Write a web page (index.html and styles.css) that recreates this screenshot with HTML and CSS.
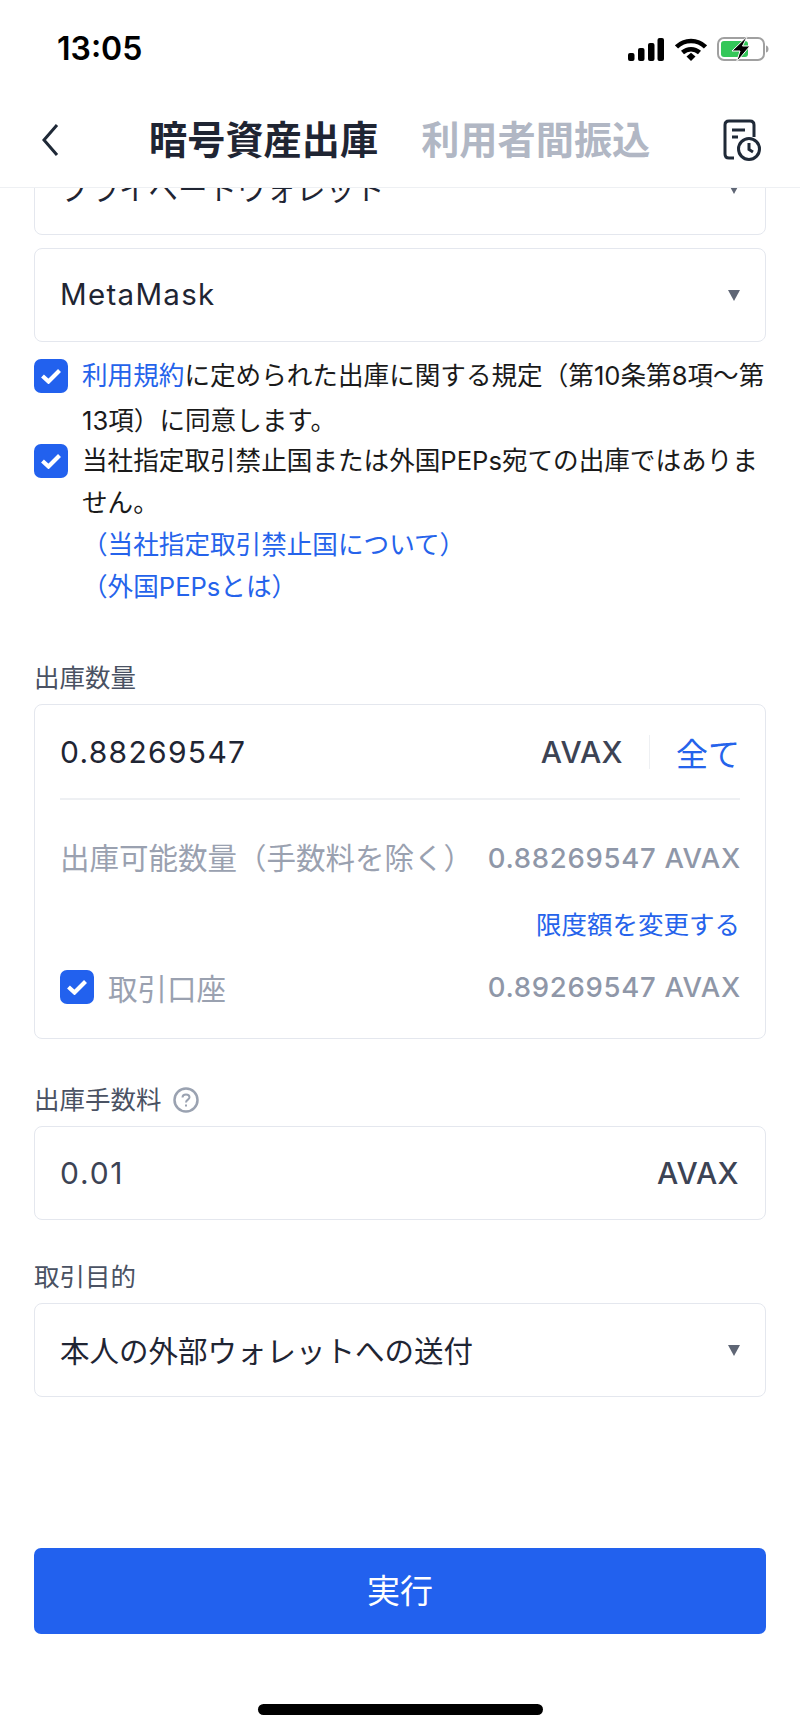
FILE: index.html
```html
<!DOCTYPE html>
<html lang="ja">
<head>
    <meta charset="UTF-8">
    <meta name="viewport" content="width=device-width, initial-scale=1.0">
    <title>暗号資産出庫</title>
    <link rel="stylesheet" href="styles.css">
</head>
<body>
    <div class="screen">
        <!-- Status bar -->
        <div class="status-bar">
            <span class="time">13:05</span>
            <div class="status-icons">
                <svg width="36" height="23" viewBox="0 0 36 23" fill="#000">
                    <rect x="0" y="15" width="6.500" height="8" rx="2"/>
                    <rect x="10" y="10" width="6.500" height="13" rx="2"/>
                    <rect x="20" y="5" width="6.500" height="18" rx="2"/>
                    <rect x="29.500" y="0" width="6.500" height="23" rx="2"/>
                </svg>
                <svg class="wifi" width="32" height="23" viewBox="0 0 32 23" fill="none" stroke="#000" stroke-width="4.500">
                    <path d="M1.500 9C9.500 1 22.500 1 30.500 9"/>
                    <path d="M7.500 14.500C12.500 10 19.500 10 24.500 14.500"/>
                    <path d="M11.500 18.500L16 14.800L20.500 18.500L16 23Z" fill="#000" stroke="none"/>
                </svg>
                <svg width="52" height="26" viewBox="0 0 52 26" fill="none">
                    <rect x="1" y="2" width="46" height="22" rx="6" stroke="#a0a0a0" stroke-width="2"/>
                    <rect x="4" y="5" width="27" height="16" rx="3" fill="#34c759"/>
                    <path d="M29 9H31V17H28Z" fill="#34c759"/>
                    <path d="M49 9.500C51 10 51.500 11.500 51.500 13C51.500 14.500 51 16 49 16.500Z" fill="#a0a0a0"/>
                    <path d="M30.500 0L15 15H23L19.500 26L33 10H25.500Z" fill="#000" stroke="#fff" stroke-width="1"/>
                </svg>
            </div>
        </div>

        <!-- Header -->
        <header class="header">
            <svg class="back" width="18" height="34" viewBox="0 0 18 34" fill="none" stroke="#1f2937" stroke-width="3">
                <path d="M16 2L3 17L16 32"/>
            </svg>
            <div class="tabs">
                <span class="tab active">暗号資産出庫</span>
                <span class="tab">利用者間振込</span>
            </div>
            <svg class="history" width="38" height="42" viewBox="0 0 38 42" fill="none" stroke="#1f2937" stroke-width="3">
                <path d="M11 39H6C3.500 39 2 37.500 2 35V6C2 3.500 3.500 2 6 2H27C29.500 2 31 3.500 31 6V18"/>
                <path d="M9 11H22M9 18H15"/>
                <circle cx="26" cy="30" r="10.500"/>
                <path d="M26 24V30.500L30 33"/>
            </svg>
        </header>

        <main class="content">
            <div class="select clipped">
                <span>プライベートウォレット</span>
                <i class="arrow"></i>
            </div>
            <div class="select">
                <span class="latin">MetaMask</span>
                <i class="arrow"></i>
            </div>

            <div class="agree terms">
                <span class="check"><svg width="20" height="16" viewBox="0 0 20 16" fill="none" stroke="#fff" stroke-width="4.200"><path d="M1.500 8L7.500 13.500L18.500 2.500"/></svg></span>
                <p><a>利用規約</a>に定められた出庫に関する規定（第10条第8項～第13項）に同意します。</p>
            </div>
            <div class="agree peps">
                <span class="check"><svg width="20" height="16" viewBox="0 0 20 16" fill="none" stroke="#fff" stroke-width="4.200"><path d="M1.500 8L7.500 13.500L18.500 2.500"/></svg></span>
                <p>当社指定取引禁止国または外国PEPs宛ての出庫ではありません。<br><a>（当社指定取引禁止国について）</a><br><a>（外国PEPsとは）</a></p>
            </div>

            <label class="field-label first">出庫数量</label>
            <div class="card">
                <div class="amount-row">
                    <span class="amount">0.88269547</span>
                    <span class="unit">AVAX</span>
                    <span class="sep"></span>
                    <a class="all">全て</a>
                </div>
                <div class="info-row available">
                    <span>出庫可能数量（手数料を除く）</span>
                    <span class="value">0.88269547 AVAX</span>
                </div>
                <a class="limit">限度額を変更する</a>
                <div class="info-row account">
                    <span class="account-name">
                        <span class="check"><svg width="20" height="16" viewBox="0 0 20 16" fill="none" stroke="#fff" stroke-width="4.200"><path d="M1.500 8L7.500 13.500L18.500 2.500"/></svg></span>
                        取引口座
                    </span>
                    <span class="value">0.89269547 AVAX</span>
                </div>
            </div>

            <label class="field-label">出庫手数料
                <svg width="26" height="26" viewBox="0 0 26 26" fill="none" stroke="#9aa2b1" stroke-width="2.500">
                    <circle cx="13" cy="13" r="11.500"/>
                    <path d="M9.500 10.500C9.500 8.500 11 7.500 13 7.500C15 7.500 16.500 8.700 16.500 10.300C16.500 12.500 13 12.800 13 15.500" stroke-width="2"/>
                    <path d="M13 17.500V19.500" stroke-width="2"/>
                </svg>
            </label>
            <div class="fee">
                <span class="fee-value">0.01</span>
                <span class="unit">AVAX</span>
            </div>

            <label class="field-label purpose">取引目的</label>
            <div class="select">
                <span>本人の外部ウォレットへの送付</span>
                <i class="arrow"></i>
            </div>
        </main>

        <footer class="footer">
            <button class="submit">実行</button>
            <div class="home-bar"></div>
        </footer>
    </div>
</body>
</html>
```

FILE: styles.css
```css
/* General Styles */
* {
    box-sizing: border-box;
}

body {
    margin: 0;
    background-color: #fff;
    color: #1f2533;
    font-family: Inter, "Noto Sans CJK JP", sans-serif;
}

.screen {
    width: 800px;
    height: 1732px;
    display: flex;
    flex-direction: column;
    overflow: hidden;
}

/* Status bar */
.status-bar {
    height: 95px;
    padding: 32px 31px 0 57px;
    display: flex;
    justify-content: space-between;
    align-items: flex-start;
}

.time {
    font-size: 32px;
    line-height: 34px;
    font-weight: 600;
    color: #000;
}

.status-icons {
    display: flex;
    align-items: center;
    gap: 11px;
    margin-top: 4px;
}

.wifi {
    margin-right: -1px;
}

/* Header */
.header {
    height: 93px;
    padding: 0 39px 2px 41px;
    display: flex;
    align-items: center;
    border-bottom: 1px solid #eef0f3;
    background-color: #fff;
    position: relative;
    z-index: 1;
}

.tabs {
    display: flex;
    gap: 43px;
    margin-left: 90px;
}

.tab {
    font-size: 38.200px;
    line-height: 50px;
    font-weight: 700;
    color: #b1b7c4;
}

.tab.active {
    color: #1f2533;
}

.history {
    margin-left: auto;
}

/* Content */
.content {
    flex: 1;
    padding: 0 34px;
}

.select {
    height: 94px;
    padding: 0 25px 3px;
    margin-bottom: 13px;
    display: flex;
    align-items: center;
    justify-content: space-between;
    border: 1px solid #e4e7ee;
    border-radius: 8px;
    font-size: 29.500px;
}

.select.clipped {
    margin-top: -47px;
}

.latin {
    letter-spacing: 1.300px;
    font-size: 29.500px;
}

.arrow {
    width: 0;
    height: 0;
    margin-top: 3px;
    border-left: 6.500px solid transparent;
    border-right: 6.500px solid transparent;
    border-top: 11px solid #5f6675;
}

/* Agreements */
.agree {
    display: flex;
    gap: 14px;
    align-items: flex-start;
    font-size: 25.600px;
    color: #1a1a1a;
}

.agree p {
    margin: 0;
    flex: 1;
}

.terms {
    margin-top: -2px;
    line-height: 45px;
}

.terms .check {
    margin-top: 6px;
}

.peps {
    margin-top: -3px;
    line-height: 42px;
}

.agree a,
.limit,
.all {
    color: #2563eb;
}

.check {
    flex: none;
    width: 34px;
    height: 34px;
    margin-top: 4px;
    display: flex;
    align-items: center;
    justify-content: center;
    background-color: #2261ee;
    border-radius: 7px;
}

/* Fields */
.field-label {
    display: flex;
    align-items: center;
    gap: 11px;
    margin: 43px 0 8px 0;
    font-size: 25.500px;
    line-height: 36px;
    color: #4a5263;
}

.field-label.first {
    margin-top: 52px;
}

.field-label.purpose {
    margin-top: 39px;
}

.card {
    height: 335px;
    padding: 0 25px;
    border: 1px solid #e4e7ee;
    border-radius: 8px;
}

.amount-row {
    height: 95px;
    display: flex;
    align-items: center;
    border-bottom: 2px solid #eef0f3;
}

.amount {
    flex: 1;
    font-size: 30px;
    letter-spacing: 1.300px;
}

.unit {
    font-size: 30px;
    font-weight: 500;
    letter-spacing: 0.400px;
    color: #3c4354;
}

.sep {
    width: 1px;
    height: 34px;
    margin: 0 26px;
    background-color: #eef0f3;
}

.all {
    font-size: 32px;
}

.info-row {
    display: flex;
    align-items: center;
    justify-content: space-between;
    font-size: 29.500px;
    color: #9aa1b0;
}

.available {
    margin-top: 35px;
    line-height: 46px;
    white-space: nowrap;
}

.value {
    margin-right: -1px;
    font-size: 27.500px;
    font-weight: 500;
    letter-spacing: 0.700px;
    color: #8f97a8;
}

.limit {
    display: block;
    margin-top: 26px;
    text-align: right;
    font-size: 25.500px;
    line-height: 36px;
}

.account {
    margin-top: 23px;
}

.account-name {
    display: flex;
    align-items: center;
    gap: 14px;
}

.account-name .check {
    margin-top: 0;
}

.fee {
    height: 94px;
    padding: 0 26px 0 25px;
    display: flex;
    align-items: center;
    justify-content: space-between;
    border: 1px solid #e4e7ee;
    border-radius: 8px;
}

.fee-value {
    font-size: 30px;
    letter-spacing: 1.800px;
    color: #3c4354;
}

/* Footer */
.footer {
    padding: 0 34px;
    height: 184px;
}

.submit {
    width: 100%;
    height: 86px;
    padding-bottom: 5px;
    border: none;
    border-radius: 7px;
    background-color: #2261ee;
    color: #fff;
    font-family: inherit;
    font-size: 33px;
}

.home-bar {
    width: 285px;
    height: 11px;
    margin: 70px auto 0;
    border-radius: 6px;
    background-color: #000;
}
```
